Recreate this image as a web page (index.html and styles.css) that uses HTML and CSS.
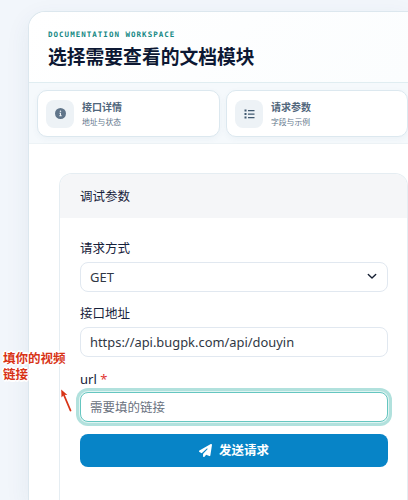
FILE: index.html
```html
<!DOCTYPE html>
<html lang="zh-CN">
<head>
<meta charset="utf-8">
<title>文档模块</title>
<link rel="stylesheet" href="styles.css">
</head>
<body>
<main class="workspace">
  <header class="head">
    <div class="eyebrow">DOCUMENTATION WORKSPACE</div>
    <h1 class="title">选择需要查看的文档模块</h1>
  </header>
  <nav class="tabs">
    <a class="tab">
      <span class="tab-icon"><svg width="11" height="11" viewBox="0 0 512 512"><path fill="currentColor" fill-rule="evenodd" d="M256 0a256 256 0 1 0 0 512a256 256 0 1 0 0-512zM208 224h72v112h32v48H200v-48h32v-64h-24zM256 112a36 36 0 1 1 0 72a36 36 0 1 1 0-72z"/></svg></span>
      <span class="tab-text"><b>接口详情</b><small>地址与状态</small></span>
    </a>
    <a class="tab">
      <span class="tab-icon"><svg width="11" height="10" viewBox="0 0 22 20"><path fill="currentColor" d="M1 1h4v4H1zM1 8h4v4H1zM1 15h4v4H1zM8 2h13v2.4H8zM8 9h13v2.4H8zM8 16h13v2.4H8z"/></svg></span>
      <span class="tab-text"><b>请求参数</b><small>字段与示例</small></span>
    </a>
  </nav>
  <section class="panel">
    <h2 class="panel-head">调试参数</h2>
    <form class="form">
      <label class="label">请求方式</label>
      <div class="field select"><span>GET</span><svg width="10" height="7" viewBox="0 0 10 7"><path d="M1.3 1.5L5 5l3.700-3.500" fill="none" stroke="#172033" stroke-width="1.4" stroke-linecap="round" stroke-linejoin="round"/></svg></div>
      <label class="label">接口地址</label>
      <div class="field"><span class="address">https://api.bugpk.com/api/douyin</span></div>
      <label class="label url">url <span class="required">*</span></label>
      <div class="field focused"><span>需要填的链接</span></div>
      <button class="send" type="button"><svg width="13" height="13" viewBox="0 0 512 512"><path fill="currentColor" d="M498 6c10 7 15 18 13 30l-64 416c-2 10-8 18-16 23s-18 5-27 2l-120-50-68 75c-9 10-23 13-36 8s-20-17-20-30v-84c0-4 2-8 4-11l168-183c6-6 6-16 0-22s-16-6-22-1L106 361 18 317c-11-5-18-16-18-28s6-23 16-29L464 4c11-6 24-5 34 2z"/></svg><span>发送请求</span></button>
    </form>
  </section>
</main>
<div class="note">填你的视频链接</div>
<svg class="arrow" width="14" height="26" viewBox="0 0 14 26"><path d="M10.500 22.500L3.500 6" stroke="#d83316" stroke-width="1.8" fill="none" stroke-linecap="round"/><path d="M1.200 1.600L7.400 7 4 6.800 1.500 9.500z" fill="#d83316"/></svg>
</body>
</html>
```
FILE: styles.css
```css
* { box-sizing: border-box; }
body {
  margin: 0;
  width: 408px;
  height: 500px;
  overflow: hidden;
  position: relative;
  padding: 11px 0 0 28px;
  background: #f2f6fb;
  font-family: "Noto Sans", "Noto Sans CJK SC", sans-serif;
  color: #16213a;
}
.workspace {
  width: 380px;
  height: 489px;
  border: 1px solid #dce7ee;
  border-right: 0;
  border-bottom: 0;
  border-radius: 17px 0 0 0;
  background: #fff;
  overflow: hidden;
  box-shadow: 0 8px 24px rgba(40, 75, 110, .08);
}
.head {
  height: 71px;
  padding: 17px 0 0 19px;
  border-bottom: 1px solid #e0edf1;
  background: linear-gradient(135deg, #fff, #fbfdfe);
}
.eyebrow {
  font: bold 7.5px/11px "DejaVu Sans Mono", monospace;
  letter-spacing: 1.02px;
  color: #138883;
}
.title {
  margin: 2px 0 0;
  font: bold 18.8px/28px "Noto Sans CJK SC", sans-serif;
  color: #0d1833;
  white-space: nowrap;
}
.tabs {
  height: 61px;
  display: flex;
  gap: 6px;
  padding: 7px 0 0 8px;
  background: #f5f9fc;
  border-bottom: 1px solid #edf3f6;
}
.tab {
  flex: 0 0 183px;
  height: 47px;
  display: flex;
  align-items: center;
  gap: 8px;
  padding-left: 8px;
  border: 1px solid #dce8ef;
  border-radius: 10px;
  background: #fff;
  box-shadow: 0 2px 6px rgba(60, 100, 130, .05);
}
.tab + .tab { flex-basis: 182px; }
.tab-icon {
  width: 28px;
  height: 28px;
  border-radius: 8px;
  background: #edf2f6;
  color: #60758a;
  display: flex;
  align-items: center;
  justify-content: center;
}
.tab + .tab .tab-icon { color: #405970; }
.tab-text { display: flex; flex-direction: column; }
.tab-text b {
  font: bold 10px/15px "Noto Sans CJK SC", sans-serif;
  color: #51667b;
}
.tab-text small {
  font: 7.8px/12px "Noto Sans CJK SC", sans-serif;
  color: #64788d;
  margin-top: 2px;
}
.tab-text { padding-bottom: 1px; }
.panel {
  width: 349px;
  height: 327px;
  margin: 29px 0 0 30px;
  border: 1px solid #e5edf2;
  border-bottom: 0;
  border-radius: 13px 13px 0 0;
  overflow: hidden;
}
.panel-head {
  margin: 0;
  height: 44px;
  padding-left: 20px;
  background: #f5f6f8;
  font: 12.5px/44px "Noto Sans CJK SC", sans-serif;
}
.form {
  width: 328px;
  padding: 20.6px 0 0 20px;
}
.label {
  display: block;
  height: 20px;
  font-size: 12.5px;
  line-height: 20px;
  margin-bottom: 3px;
}
.label.url { font-size: 13px; }
.required { color: #df3434; }
.field {
  height: 30px;
  margin-bottom: 12px;
  padding: 0 10px 0 9px;
  display: flex;
  align-items: center;
  border: 1px solid #e1e8f0;
  border-radius: 8px;
  background: #fff;
  font-size: 12.5px;
  color: #303744;
}
.address { font-size: 12.9px; white-space: nowrap; }
.select { justify-content: space-between; font-size: 13px; }
.focused {
  border-color: #65c6c0;
  box-shadow: 0 0 0 1px #e0f4f2, 0 0 0 4px #b1e1dd;
  color: #6a7280;
}
.send {
  width: 308px;
  height: 33px;
  padding: 0;
  border: 0;
  border-radius: 8px;
  background: #0784c7;
  color: #fff;
  display: flex;
  align-items: center;
  justify-content: center;
  gap: 7px;
  font: bold 12.5px/20px "Noto Sans CJK SC", sans-serif;
}
.note {
  position: absolute;
  left: 3px;
  top: 350px;
  width: 64px;
  font: bold 12.5px/16px "Noto Sans CJK SC", sans-serif;
  color: #d83316;
  text-shadow: 2px 0 #fff, -2px 0 #fff, 0 2px #fff, 0 -2px #fff, 1px 1px #fff, -1px -1px #fff, 0 0 2px #fff;
}
.arrow {
  position: absolute;
  left: 60px;
  top: 388px;
}
```
